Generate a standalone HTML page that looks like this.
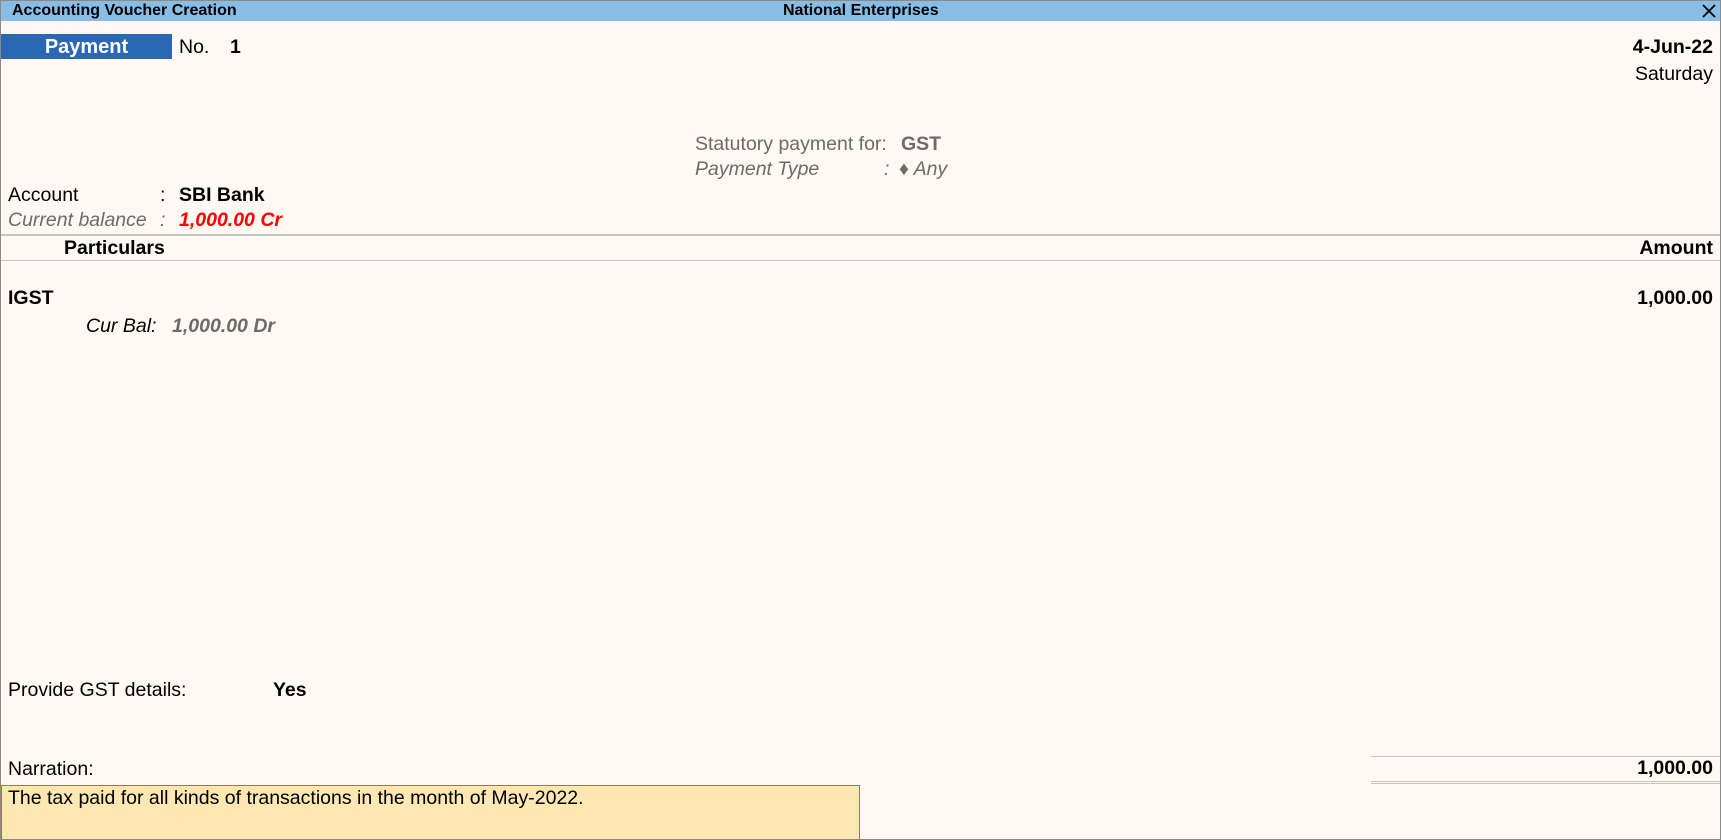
<!DOCTYPE html>
<html><head><style>
*{margin:0;padding:0;box-sizing:border-box}
body{width:1721px;height:840px;overflow:hidden;background:#fef9f3;font-family:"Liberation Sans",sans-serif;font-size:19.5px;color:#000;position:relative}
.frame{position:absolute;inset:0;border:1px solid #8a8a8a;border-top:none}
.t{position:absolute;white-space:nowrap;line-height:22px}
.b{font-weight:bold}
.i{font-style:italic}
.g{color:#6b6b6b}
.r{right:8px;text-align:right}
.hl{position:absolute;height:1px;background:#c4c4c4}
</style></head><body>
<div style="position:absolute;left:0;top:0;width:1721px;height:21px;background:#88bde6;border-top:1px solid #8a8a8a"></div>
<div class="t b" style="left:12px;top:1px;font-size:16px;line-height:19px">Accounting Voucher Creation</div>
<div class="t b" style="left:783px;top:1px;font-size:16px;line-height:19px">National Enterprises</div>
<svg style="position:absolute;right:5px;top:4px" width="14" height="14" viewBox="0 0 14 14"><path d="M1 1L13 13M13 1L1 13" stroke="#000" stroke-width="1.8"/></svg>
<div style="position:absolute;left:1px;top:34px;width:171px;height:25px;background:#2c67b4"></div>
<div class="t b" style="left:1px;top:36px;width:171px;text-align:center;color:#fff;font-size:20px">Payment</div>
<div class="t" style="left:179px;top:36px">No.</div>
<div class="t b" style="left:230px;top:36px">1</div>
<div class="t b r" style="top:36px">4-Jun-22</div>
<div class="t r" style="top:63px">Saturday</div>
<div class="t g" style="left:695px;top:133px">Statutory payment for:</div>
<div class="t b g" style="left:901px;top:133px">GST</div>
<div class="t g i" style="left:695px;top:158px">Payment Type</div>
<div class="t g i" style="left:884px;top:158px">:</div>
<div class="t g i" style="left:899px;top:158px">♦ Any</div>
<div class="t" style="left:8px;top:184px">Account</div>
<div class="t" style="left:160px;top:184px">:</div>
<div class="t b" style="left:179px;top:184px">SBI Bank</div>
<div class="t g i" style="left:8px;top:209px">Current balance</div>
<div class="t g i" style="left:160px;top:209px">:</div>
<div class="t b i" style="left:179px;top:209px;color:#f00">1,000.00 Cr</div>
<div class="hl" style="left:0;top:234px;width:1721px;height:2px"></div>
<div class="t b" style="left:64px;top:237px">Particulars</div>
<div class="t b r" style="top:237px">Amount</div>
<div class="hl" style="left:0;top:260px;width:1721px"></div>
<div class="t b" style="left:8px;top:287px">IGST</div>
<div class="t b r" style="top:287px">1,000.00</div>
<div class="t i" style="left:86px;top:315px">Cur Bal:</div>
<div class="t b i g" style="left:172px;top:315px">1,000.00 Dr</div>
<div class="t" style="left:8px;top:679px">Provide GST details:</div>
<div class="t b" style="left:273px;top:679px">Yes</div>
<div class="t" style="left:8px;top:758px">Narration:</div>
<div class="hl" style="left:1371px;top:756px;width:350px"></div>
<div class="t b r" style="top:757px">1,000.00</div>
<div class="hl" style="left:1371px;top:781px;width:350px"></div>
<div class="hl" style="left:1371px;top:783px;width:350px"></div>
<div style="position:absolute;left:1px;top:785px;width:859px;height:55px;background:#fde7b2;border:1px solid #3a8fd0;border-bottom:none"></div>
<div class="t" style="left:8px;top:787px">The tax paid for all kinds of transactions in the month of May-2022.</div>
<div class="frame"></div>
</body></html>
